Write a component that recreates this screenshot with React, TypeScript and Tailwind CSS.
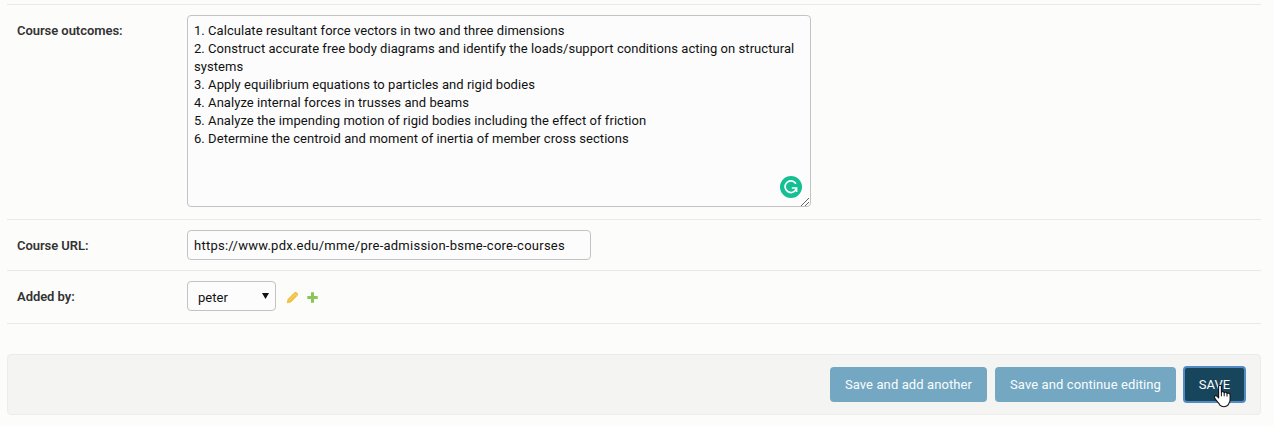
import React from 'react';

const outcomes = [
  '1. Calculate resultant force vectors in two and three dimensions',
  '2. Construct accurate free body diagrams and identify the loads/support conditions acting on structural systems',
  '3. Apply equilibrium equations to particles and rigid bodies',
  '4. Analyze internal forces in trusses and beams',
  '5. Analyze the impending motion of rigid bodies including the effect of friction',
  '6. Determine the centroid and moment of inertia of member cross sections',
].join('\n');

function Label({ htmlFor, children }: { htmlFor: string; children: React.ReactNode }) {
  return (
    <label htmlFor={htmlFor} className="w-[170px] shrink-0 pt-[8px] text-[13px] leading-4 font-semibold tracking-[-0.05px] text-[#333]">
      {children}
    </label>
  );
}

function GrammarBadge() {
  return (
    <svg className="absolute top-[161px] left-[593px] size-[22px]" viewBox="0 0 22 22" fill="none">
      <circle cx="11" cy="11" r="11" fill="#15bf94" />
      <path d="M15.5 7.2A5.8 5.8 0 1 0 16.2 13" stroke="#fff" strokeWidth="1.7" strokeLinecap="round" />
      <path d="M11.8 12h4.8v4" stroke="#fff" strokeWidth="1.6" />
    </svg>
  );
}

function ResizeGrip() {
  return (
    <svg className="absolute right-[2px] bottom-[1px] size-[8px]" viewBox="0 0 8 8" fill="none" stroke="#555" strokeWidth="0.9">
      <path d="M0 8L8 0M4 8l4-4" />
    </svg>
  );
}

function PencilIcon() {
  return (
    <svg className="size-[13px]" viewBox="0 0 13 13" fill="none">
      <path d="M0.8 12.2L1.5 8.2 8.2 1.5Q9.5.3 10.8 1.4l.9.9q1.1 1.1 0 2.2L4.9 11.4z" fill="#efc144" />
      <path d="M3.4 9.3l5.3-5.3" stroke="#f6dc8e" strokeWidth="0.8" />
      <path d="M8.1 2.3l2.6 2.6" stroke="#f8e3a6" strokeWidth="0.6" />
    </svg>
  );
}

function PlusIcon() {
  return (
    <svg className="size-[11px]" viewBox="0 0 11 11" fill="#8bc558">
      <path d="M4 0.3h3V4h3.7v3H7v3.7H4V7H.3V4H4z" />
    </svg>
  );
}

function HandCursor() {
  return (
    <svg className="pointer-events-none absolute top-[17px] left-[29px] h-[24px] w-[19px]" viewBox="0 0 19 24">
      <path
        d="M5.6 2.6C5.6.7 8.4.7 8.4 2.6v5.6c.6-1 2.6-.8 2.8.6.7-.9 2.6-.6 2.8.8 1.1-.9 3.1-.3 3.1 1.5v4.6c0 2.6-1.4 3.5-2.2 5.5-2 2-6 2-8 0-.4-2.2-3.6-3.8-5.2-7.3-.9-2 1-3.2 2.6-1.4l1.3 1.4z"
        fill="#fff"
        stroke="#111"
        strokeWidth="1.1"
        strokeLinejoin="round"
      />
      <path d="M8.4 8v4.3M11.2 8.8v3.5M14 9.8v2.8" stroke="#111" strokeWidth="1" fill="none" />
    </svg>
  );
}

export default function App() {
  return (
    <div className="h-[426px] overflow-hidden bg-[#fcfcfb] pt-1 pr-[13px] pl-[7px] font-['Roboto',sans-serif] text-[13px]">
      <form>
        <div className="flex h-[215px] border-t border-[#e9e9e8] pt-[10px] pl-[10px]">
          <Label htmlFor="outcomes">Course outcomes:</Label>
          <div className="relative h-[192px] w-[624px]">
            <textarea
              id="outcomes"
              readOnly
              defaultValue={outcomes}
              className="block h-full w-full resize-none overflow-hidden rounded-[4px] border border-[#c3c3c3] bg-[#fcfcfc] px-[6px] py-[6px] text-[13px] leading-[18px] tracking-[0.05px] text-[#111] outline-none"
            />
            <GrammarBadge />
            <ResizeGrip />
          </div>
        </div>
        <div className="flex h-[51px] border-t border-[#e9e9e8] pt-[10px] pl-[10px]">
          <Label htmlFor="url">Course URL:</Label>
          <input
            id="url"
            readOnly
            defaultValue="https://www.pdx.edu/mme/pre-admission-bsme-core-courses"
            className="h-[30px] w-[404px] rounded-[4px] border border-[#c3c3c3] bg-[#fcfcfc] px-[6px] text-[13px] tracking-[0.25px] text-[#111] outline-none"
          />
        </div>
        <div className="flex h-[54px] border-y border-[#e9e9e8] pt-[10px] pl-[10px]">
          <Label htmlFor="owner">Added by:</Label>
          <button
            id="owner"
            type="button"
            className="flex h-[30px] w-[89px] items-center justify-between rounded-[4px] border border-[#c3c3c3] bg-[#fcfcfc] pr-[6px] pl-[10px] text-[#111]"
          >
            <span className="pt-[4px] tracking-[0.05px]">peter</span>
            <svg className="mb-[1px] h-[6px] w-[7px]" viewBox="0 0 7 6" fill="#111"><path d="M0 0h7L3.5 6z" /></svg>
          </button>
          <div className="flex h-[30px] items-center gap-[8px] pt-[3px] pl-[10px]">
            <PencilIcon />
            <PlusIcon />
          </div>
        </div>
        <div className="mt-[30px] flex h-[61px] items-start justify-end gap-2 rounded-[4px] border border-[#ececeb] bg-[#f4f4f3] pt-[12px] pr-[15px] text-[13px] text-[#fafdff]">
          <button type="button" className="h-[35px] w-[157px] rounded-[4px] bg-[#74a7c2] tracking-[0.1px]">Save and add another</button>
          <button type="button" className="h-[35px] w-[181px] rounded-[4px] bg-[#74a7c2] tracking-[0.1px]">Save and continue editing</button>
          <button type="button" className="relative h-[35px] w-[61px] rounded-[3px] bg-[#17465c] outline-2 outline-offset-[-1px] outline-[#5389c4]">
            SAVE
            <HandCursor />
          </button>
        </div>
      </form>
    </div>
  );
}
